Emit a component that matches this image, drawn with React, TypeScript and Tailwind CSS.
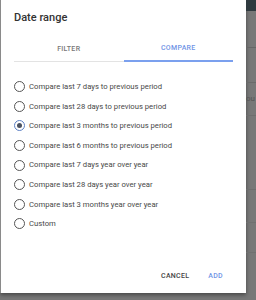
import React, { useState } from 'react';

const options = [
  'Compare last 7 days to previous period',
  'Compare last 28 days to previous period',
  'Compare last 3 months to previous period',
  'Compare last 6 months to previous period',
  'Compare last 7 days year over year',
  'Compare last 28 days year over year',
  'Compare last 3 months year over year',
  'Custom',
];

function Radio({ checked }: { checked: boolean }) {
  return (
    <span
      className={`w-[11px] h-[11px] rounded-full flex items-center justify-center shrink-0 border-[1.3px] ${
        checked ? 'border-[#5b7fc4]' : 'border-[#555]'
      }`}
    >
      {checked && <span className="w-[5px] h-[5px] rounded-full bg-[#4a5160]" />}
    </span>
  );
}

export default function App() {
  const [selected, setSelected] = useState(2);
  const [tab, setTab] = useState<'filter' | 'compare'>('compare');

  return (
    <div className="w-[256px] h-[300px] bg-[#787878] flex overflow-hidden" style={{ fontFamily: 'Roboto, "Liberation Sans", sans-serif' }}>
      <div className="w-[246px] h-[293px] bg-white border-l border-[#8a8a8a] shadow-[0_2px_4px_rgba(0,0,0,0.4)] flex flex-col">
        <h2 className="pl-[13px] pt-[11px] text-[11px] leading-[13px] font-medium text-[#333]">Date range</h2>

        <div className="mx-[13px] mt-[13px] flex">
          <button
            onClick={() => setTab('filter')}
            className={`flex-1 h-[25px] flex items-center justify-center text-[7px] font-medium tracking-[0.3px] border-b ${
              tab === 'filter' ? 'text-[#6f94e6] border-b-2 border-[#7ba0ee]' : 'text-[#777] border-[#e3e3e3]'
            }`}
          >
            FILTER
          </button>
          <button
            onClick={() => setTab('compare')}
            className={`flex-1 h-[25px] flex items-center justify-center text-[7px] font-medium tracking-[0.3px] ${
              tab === 'compare' ? 'text-[#6f94e6] border-b-2 border-[#7ba0ee]' : 'text-[#777] border-b border-[#e3e3e3]'
            }`}
          >
            COMPARE
          </button>
        </div>

        <div className="mt-[15px] flex flex-col">
          {options.map((opt, idx) => (
            <label
              key={idx}
              onClick={() => setSelected(idx)}
              className="h-[19.6px] flex items-center gap-[4px] pl-[13px] cursor-pointer"
            >
              <Radio checked={selected === idx} />
              <span className="text-[7.7px] text-[#484848]">{opt}</span>
            </label>
          ))}
        </div>

        <div className="mt-auto pb-[12px] flex justify-end items-center gap-[19px] pr-[23px]">
          <button className="text-[7px] font-medium tracking-[0.3px] text-[#444]">CANCEL</button>
          <button className="text-[7px] font-medium tracking-[0.3px] text-[#6f94e6]">ADD</button>
        </div>
      </div>

      <div className="flex-1 flex flex-col">
        <div className="h-[11px] bg-[#2f3a3f]" />
        <div className="h-[37px] border-b border-[#666]" />
        <div className="h-[35px] border-b border-[#6a6a6a]" />
        <div className="h-[32px] flex items-center text-[8px] text-[#555]">ou</div>
        <div className="h-[1px] bg-[#6e6e6e]" />
        <div className="h-[74px] border-b border-[#6e6e6e]" />
        <div className="h-[33px] border-b border-[#707070]" />
        <div className="h-[30px] border-b border-[#707070]" />
      </div>
    </div>
  );
}
